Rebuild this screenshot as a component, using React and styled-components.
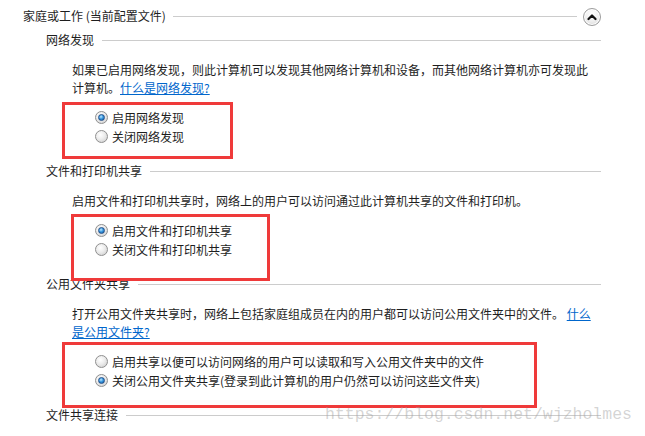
import styled, {createGlobalStyle} from 'styled-components';

const GlobalStyle = createGlobalStyle`
    body {
        margin: 0;
        padding: 0;
        background: #ffffff;
        font-family: "Noto Sans CJK SC", "Noto Sans", sans-serif;
        font-size: 12px;
        color: #1e1e1e;
    }
`;

const Page = styled.div`
    position: relative;
    box-sizing: border-box;
    width: 645px;
    height: 436px;
    overflow: hidden;
    padding: 7px 44px 0 23px;
`;

const GroupHeader = styled.div`
    display: flex;
    align-items: center;
    gap: 7px;
    height: 18px;
`;

const HeaderText = styled.span`
    white-space: nowrap;
    line-height: 18px;
`;

const Rule = styled.div`
    flex: 1;
    height: 1px;
    background: #cccccc;
    margin-top: ${p => p.$offset || 0}px;
`;

const CollapseButton = styled.button`
    width: 18px;
    height: 18px;
    padding: 0;
    margin-left: -1px;
    margin-top: 2px;
    border-radius: 50%;
    border: 1px solid #9c9c9c;
    background: radial-gradient(circle at 50% 30%, #ffffff 0%, #f0f0f0 50%, #d6d6d6 100%);
    box-shadow: inset 0 0 0 1px #ffffff;
    display: flex;
    align-items: center;
    justify-content: center;
    cursor: pointer;
`;

const Body = styled.div`
    padding-left: 23px;
    margin-top: 6px;
`;

const Section = styled.section`
    margin-top: ${p => (p.$first ? 0 : 16)}px;
`;

const SectionTitle = styled.div`
    display: flex;
    align-items: center;
    gap: 8px;
    height: 18px;
    line-height: 18px;
    white-space: nowrap;
`;

const Desc = styled.p`
    margin: 12px 0 0;
    padding-left: 26px;
    line-height: 18px;
    white-space: nowrap;
`;

const HelpLink = styled.a`
    color: #0066cc;
    text-decoration: underline;
    cursor: pointer;
`;

const Options = styled.div`
    position: relative;
    margin-top: 11px;
    padding-left: 49px;
`;

const OptionRow = styled.label`
    display: flex;
    align-items: center;
    gap: 4px;
    height: 19px;
    white-space: nowrap;
`;

const RadioDot = styled.span`
    position: relative;
    box-sizing: border-box;
    width: 13px;
    height: 13px;
    border-radius: 50%;
    border: 1px solid #8f8f8f;
    background: radial-gradient(circle at 40% 35%, #ffffff 0%, #ececec 45%, #c8c8c8 100%);
    flex-shrink: 0;

    &::after {
        content: '';
        display: ${p => (p.$checked ? 'block' : 'none')};
        position: absolute;
        left: 2px;
        top: 2px;
        width: 7px;
        height: 7px;
        box-sizing: border-box;
        border-radius: 50%;
        border: 1px solid #23508a;
        background: radial-gradient(circle at 40% 35%, #bfe7ff 0%, #3a9ae0 45%, #0d4f9a 100%);
    }
`;

// 주석용 빨간 테두리 (스크린샷 위에 그려진 표시)
const Highlight = styled.div`
    position: absolute;
    box-sizing: border-box;
    border: 3px solid #ef3a3a;
    left: ${p => p.$left}px;
    top: ${p => p.$top}px;
    width: ${p => p.$width}px;
    height: ${p => p.$height}px;
    pointer-events: none;
`;

const Watermark = styled.div`
    position: absolute;
    left: 325px;
    top: 405px;
    font-family: "Liberation Mono", "DejaVu Sans Mono", monospace;
    font-size: 16.5px;
    line-height: 20px;
    color: rgba(160, 160, 160, 0.45);
    white-space: nowrap;
    pointer-events: none;
`;

function Radio({checked, children}) {
    return (
            <OptionRow>
                <RadioDot $checked={checked}/>
                <span>{children}</span>
            </OptionRow>
    );
}

const sections = [
    {
        title: '网络发现',
        lines: ['如果已启用网络发现，则此计算机可以发现其他网络计算机和设备，而其他网络计算机亦可发现此', '计算机。'],
        link: '什么是网络发现?',
        options: [
            {label: '启用网络发现', checked: true},
            {label: '关闭网络发现', checked: false},
        ],
        box: {left: 16, top: -6, width: 171, height: 57},
    },
    {
        title: '文件和打印机共享',
        lines: ['启用文件和打印机共享时，网络上的用户可以访问通过此计算机共享的文件和打印机。'],
        options: [
            {label: '启用文件和打印机共享', checked: true},
            {label: '关闭文件和打印机共享', checked: false},
        ],
        box: {left: 25, top: -7, width: 199, height: 67},
    },
    {
        title: '公用文件夹共享',
        lines: ['打开公用文件夹共享时，网络上包括家庭组成员在内的用户都可以访问公用文件夹中的文件。', ''],
        linkParts: ['什么', '是公用文件夹?'],
        options: [
            {label: '启用共享以便可以访问网络的用户可以读取和写入公用文件夹中的文件', checked: false},
            {label: '关闭公用文件夹共享(登录到此计算机的用户仍然可以访问这些文件夹)', checked: true},
        ],
        box: {left: 16, top: -10, width: 475, height: 66},
    },
];

function App() {
    return (
            <>
                <GlobalStyle/>
                <Page>
                    <GroupHeader>
                        <HeaderText>家庭或工作 (当前配置文件)</HeaderText>
                        <Rule $offset={1}/>
                        <CollapseButton aria-label="折叠">
                            <svg width="10" height="8" viewBox="0 0 10 8">
                                <path d="M1.5 6 L5 2.5 L8.5 6" fill="none" stroke="#111"
                                      strokeWidth="2.2" strokeLinecap="round" strokeLinejoin="round"/>
                            </svg>
                        </CollapseButton>
                    </GroupHeader>

                    <Body>
                        {sections.map((s, i) => (
                                <Section key={s.title} $first={i === 0}>
                                    <SectionTitle>
                                        {s.title}
                                        <Rule/>
                                    </SectionTitle>
                                    <Desc>
                                        {s.lines[0]}
                                        {s.linkParts && <> <HelpLink>{s.linkParts[0]}</HelpLink></>}
                                        {s.lines.length > 1 && <br/>}
                                        {s.lines[1]}
                                        {s.link && <HelpLink>{s.link}</HelpLink>}
                                        {s.linkParts && <HelpLink>{s.linkParts[1]}</HelpLink>}
                                    </Desc>
                                    <Options>
                                        {s.options.map(o => (
                                                <Radio key={o.label} checked={o.checked}>{o.label}</Radio>
                                        ))}
                                        <Highlight $left={s.box.left} $top={s.box.top}
                                                   $width={s.box.width} $height={s.box.height}/>
                                    </Options>
                                </Section>
                        ))}
                        <Section>
                            <SectionTitle>
                                文件共享连接
                                <Rule/>
                            </SectionTitle>
                        </Section>
                    </Body>

                    <Watermark>https://blog.csdn.net/wjzholmes</Watermark>
                </Page>
            </>
    );
}

export default App;
